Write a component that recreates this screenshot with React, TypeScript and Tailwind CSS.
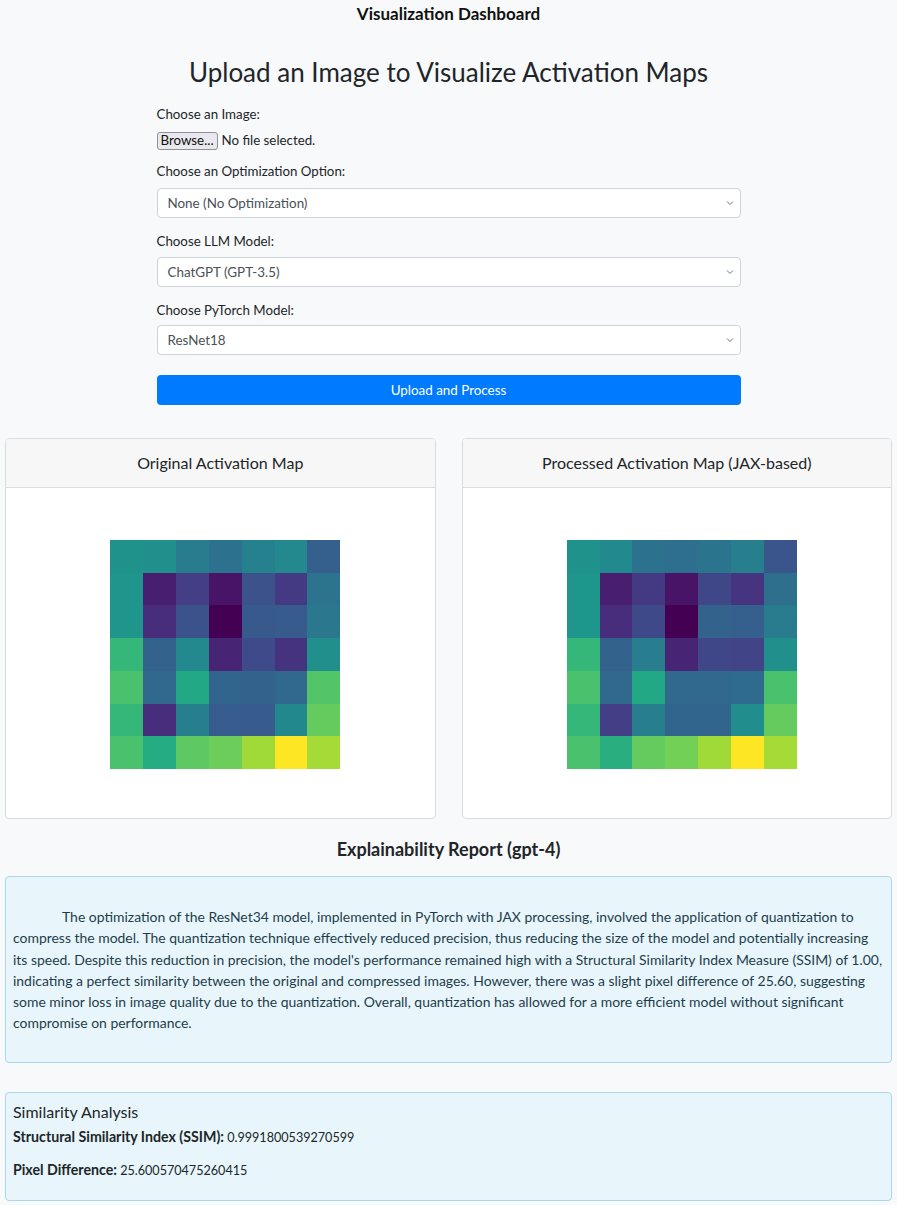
import React from "react";

const left: string[][] = [
  ["#20928c", "#21908d", "#297b8e", "#2c718e", "#26818e", "#23898e", "#355f8d"],
  ["#1f968b", "#481f70", "#433e85", "#481467", "#3b528b", "#443983", "#2c738e"],
  ["#1f968b", "#472d7b", "#3b528b", "#440154", "#38598c", "#375b8d", "#2a778e"],
  ["#35b779", "#33638d", "#23898e", "#482475", "#3e4a89", "#46337f", "#21908d"],
  ["#4ac16d", "#31688e", "#22a884", "#32658e", "#33638d", "#31688e", "#52c569"],
  ["#35b779", "#472d7b", "#277f8e", "#365d8d", "#375b8d", "#23888e", "#65cb5e"],
  ["#4ac16d", "#25ac82", "#5ec962", "#6ccd5a", "#a0da39", "#fde725", "#a5db36"],
];

const right: string[][] = [
  ["#20928c", "#22898e", "#2c728e", "#2e6e8e", "#2b748e", "#277f8e", "#3a548c"],
  ["#1f968b", "#481f70", "#443983", "#481467", "#3f4788", "#463480", "#2e6f8e"],
  ["#1f968b", "#472d7b", "#3e4989", "#440154", "#33638d", "#355f8d", "#287c8e"],
  ["#35b779", "#33638d", "#287d8e", "#482475", "#3f4788", "#414487", "#21908d"],
  ["#4ac16d", "#31688e", "#22a884", "#31688e", "#31688e", "#2f6b8e", "#4ac16d"],
  ["#35b779", "#433e85", "#277f8e", "#32658e", "#32658e", "#228d8d", "#65cb5e"],
  ["#4ac16d", "#29af7f", "#65cb5e", "#73d056", "#a0da39", "#fde725", "#a5db36"],
];

const font = { fontFamily: "Lato, 'Open Sans', sans-serif" };

function Heatmap({ data }: { data: string[][] }) {
  return (
    <div className="grid grid-cols-7 grid-rows-7 w-[230px] h-[229px]">
      {data.flat().map((c, i) => (
        <div key={i} style={{ backgroundColor: c }} />
      ))}
    </div>
  );
}

function Chevron() {
  return (
    <svg className="absolute right-[6px] top-1/2 -translate-y-1/2" width="8" height="6" viewBox="0 0 8 6" fill="none">
      <path d="M1 1.5 L4 4.5 L7 1.5" stroke="#6c757d" strokeWidth="1" />
    </svg>
  );
}

function Select({ value }: { value: string }) {
  return (
    <div className="relative h-[30px] w-full bg-white border border-[#ced4da] rounded-[4px] flex items-center pl-[10px] text-[13.4px] text-[#495057]">
      {value}
      <Chevron />
    </div>
  );
}

function Card({ title, data }: { title: string; data: string[][] }) {
  return (
    <div className="border border-[#dcdcdc] rounded-[4px] bg-white overflow-hidden">
      <div className="h-[49px] bg-[#f7f7f7] border-b border-[#dcdcdc] flex items-center justify-center text-[16px] text-[#212529]">
        {title}
      </div>
      <div className="h-[330px] flex justify-center pl-[10px] pt-[52px]">
        <Heatmap data={data} />
      </div>
    </div>
  );
}

export default function App() {
  return (
    <div className="min-h-[1205px] bg-[#f8f9fa] text-[#212529]" style={font}>
      <div className="h-[27px] flex items-center justify-center text-[17px] font-bold text-[#111]">
        Visualization Dashboard
      </div>
      <h2 className="text-center text-[26px] leading-[32px] mt-[29px] text-[#212529]">
        Upload an Image to Visualize Activation Maps
      </h2>
      <div className="w-[584px] mx-auto mt-[16px] text-[13.3px]">
        <div className="leading-[21px]">Choose an Image:</div>
        <div className="flex items-center mt-[7px] h-[18px] gap-[4px]">
          <div className="h-[18px] px-[3px] border border-[#8f8f9d] bg-[#e9e9ed] rounded-[3px] flex items-center text-[13.3px] text-[#111]">
            Browse...
          </div>
          <span className="text-[13.3px]">No file selected.</span>
        </div>
        <div className="leading-[21px] mt-[11px]">Choose an Optimization Option:</div>
        <div className="mt-[6px]"><Select value="None (No Optimization)" /></div>
        <div className="leading-[21px] mt-[13px]">Choose LLM Model:</div>
        <div className="mt-[5px]"><Select value="ChatGPT (GPT-3.5)" /></div>
        <div className="leading-[21px] mt-[13px]">Choose PyTorch Model:</div>
        <div className="mt-[4px]"><Select value="ResNet18" /></div>
        <div className="mt-[20px] h-[30px] bg-[#007bff] rounded-[4px] flex items-center justify-center text-white text-[13.4px]">
          Upload and Process
        </div>
      </div>
      <div className="grid grid-cols-2 gap-[26px] px-[5px] mt-[33px]">
        <Card title="Original Activation Map" data={left} />
        <Card title="Processed Activation Map (JAX-based)" data={right} />
      </div>
      <div className="text-center font-bold text-[18px] leading-[24px] mt-[18px] text-[#212529]">
        Explainability Report (gpt-4)
      </div>
      <div className="mx-[5px] mt-[15px] bg-[#e8f6fb] border border-[#aad8ea] rounded-[4px] pt-[29px] pb-[28px] px-[7px] text-[13.95px] leading-[21.3px] text-[#1e3d4c]">
        <p className="indent-[49px]">
          The optimization of the ResNet34 model, implemented in PyTorch with JAX processing, involved the application of quantization to compress the model. The quantization technique effectively reduced precision, thus reducing the size of the model and potentially increasing its speed. Despite this reduction in precision, the model's performance remained high with a Structural Similarity Index Measure (SSIM) of 1.00, indicating a perfect similarity between the original and compressed images. However, there was a slight pixel difference of 25.60, suggesting some minor loss in image quality due to the quantization. Overall, quantization has allowed for a more efficient model without significant compromise on performance.
        </p>
      </div>
      <div className="mx-[5px] mt-[29px] bg-[#e8f6fb] border border-[#aad8ea] rounded-[4px] px-[7px] pt-[8px] pb-[19px] text-[#212529]">
        <div className="text-[16px] leading-[22px]">Similarity Analysis</div>
        <div className="text-[12.6px] leading-[20px] mt-[4px]">
          <span className="font-bold text-[14.2px]">Structural Similarity Index (SSIM):</span> 0.9991800539270599
        </div>
        <div className="text-[12.6px] leading-[20px] mt-[12px]">
          <span className="font-bold text-[14.2px]">Pixel Difference:</span> 25.600570475260415
        </div>
      </div>
    </div>
  );
}
